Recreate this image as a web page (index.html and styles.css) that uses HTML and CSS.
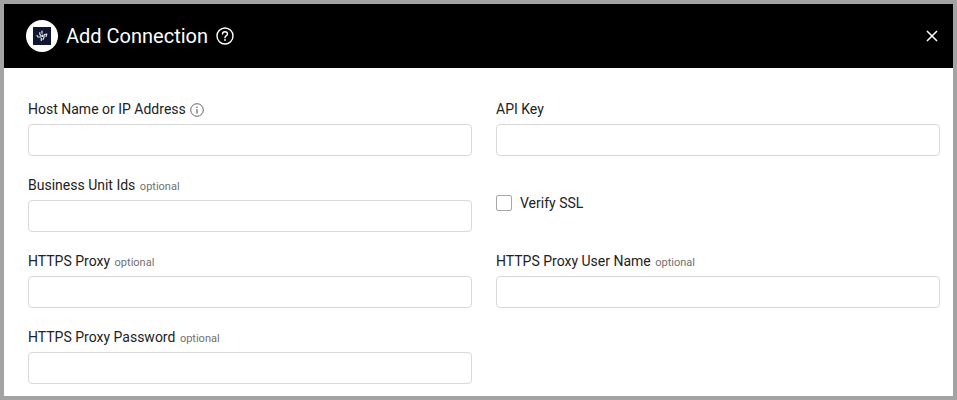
FILE: index.html
```html
<!DOCTYPE html>
<html lang="en">
<head>
<meta charset="utf-8">
<title>Add Connection</title>
<link rel="stylesheet" href="styles.css">
</head>
<body>
<div class="dialog">
  <header class="header">
    <span class="logo">
      <span class="logo-box">
        <svg width="18" height="18" viewBox="0 0 18 18" fill="none" stroke="#e8e8ee" stroke-width="1.2" stroke-linecap="round">
          <path d="M9 4V6.200M9.500 8V9.500M6.800 5.500V7.300L8.300 9M4 8.500L5 10H7.500M8.300 11V13.500M11 8V10.500L10 12.500M13.800 7L13 9.500M11.500 7.500L13.800 7"/>
        </svg>
      </span>
    </span>
    <h1 class="title">Add Connection</h1>
    <svg class="help" width="20" height="20" viewBox="0 0 20 20" fill="none" stroke="#fff" stroke-width="1.4">
      <circle cx="10" cy="10" r="8"/>
      <path d="M7.500 8C7.500 6.500 8.700 5.700 10 5.700C11.400 5.700 12.500 6.600 12.500 7.900C12.500 9.600 10 9.600 10 11.700" stroke-linecap="round"/>
      <circle cx="10" cy="14" r="0.9" fill="#fff" stroke="none"/>
    </svg>
    <svg class="close" width="12" height="12" viewBox="0 0 12 12" stroke="#fff" stroke-width="1.5">
      <path d="M1 1L11 11M11 1L1 11"/>
    </svg>
  </header>
  <form class="form">
    <div class="field">
      <label class="label"><span>Host Name or IP Address</span><svg class="info" width="14" height="14" viewBox="0 0 14 14" fill="none" stroke="#666" stroke-width="1">
          <circle cx="7" cy="7" r="6.300"/>
          <path d="M7 6.200V10.500" stroke-width="1.300"/>
          <circle cx="7" cy="4.200" r="0.800" fill="#666" stroke="none"/>
        </svg></label>
      <input class="input" type="text">
    </div>
    <div class="field">
      <label class="label"><span>API Key</span></label>
      <input class="input" type="text">
    </div>
    <div class="field">
      <label class="label"><span>Business Unit Ids</span><span class="optional">optional</span></label>
      <input class="input" type="text">
    </div>
    <div class="check-field">
      <span class="checkbox"></span>
      <span class="label">Verify SSL</span>
    </div>
    <div class="field">
      <label class="label"><span>HTTPS Proxy</span><span class="optional">optional</span></label>
      <input class="input" type="text">
    </div>
    <div class="field">
      <label class="label"><span>HTTPS Proxy User Name</span><span class="optional">optional</span></label>
      <input class="input" type="text">
    </div>
    <div class="field">
      <label class="label"><span>HTTPS Proxy Password</span><span class="optional">optional</span></label>
      <input class="input" type="text">
    </div>
  </form>
</div>
</body>
</html>
```
FILE: styles.css
```css
* {
  box-sizing: border-box;
}

html,
body {
  margin: 0;
  height: 400px;
  overflow: hidden;
}

body {
  font-family: Roboto, "Liberation Sans", sans-serif;
  background: #fff;
}

.dialog {
  height: 400px;
  border: 4px solid #a3a3a3;
  background: #fff;
  overflow: hidden;
}

.header {
  height: 64px;
  background: #000;
  display: flex;
  align-items: center;
  padding: 0 15px 0 22px;
  color: #fff;
}

.logo {
  width: 32px;
  height: 32px;
  border-radius: 50%;
  background: #fff;
  display: flex;
  align-items: center;
  justify-content: center;
  flex: none;
}

.logo-box {
  width: 18px;
  height: 18px;
  background: #0f1631;
  display: block;
}

.logo-box svg {
  display: block;
}

.title {
  margin: 0 0 0 8px;
  font-size: 20px;
  font-weight: 400;
  line-height: 28px;
}

.help {
  margin-left: 7px;
}

.close {
  margin-left: auto;
}

.form {
  display: grid;
  grid-template-columns: 444px 444px;
  column-gap: 24px;
  grid-auto-rows: 76px;
  padding: 29px 0 0 24px;
}

.field {
  display: flex;
  flex-direction: column;
}

.label {
  display: flex;
  align-items: center;
  height: 24px;
  margin-bottom: 3px;
  font-size: 14px;
  line-height: 24px;
  color: #222;
}

.check-field .label {
  margin-bottom: 0;
}

.optional {
  font-size: 11px;
  color: #707070;
  margin-left: 4.5px;
  padding-top: 4px;
}

.info {
  margin-left: 4px;
  margin-top: 1px;
}

.input {
  height: 32px;
  border: 1px solid #d9d9d9;
  border-radius: 4px;
  background: #fff;
  margin: 0;
  padding: 0 8px;
}

.check-field {
  display: flex;
  align-items: center;
  gap: 8px;
  height: 24px;
  margin-top: 18px;
}

.checkbox {
  width: 16px;
  height: 16px;
  border: 1px solid #a8a8a8;
  border-radius: 2px;
  background: #fff;
}
```
